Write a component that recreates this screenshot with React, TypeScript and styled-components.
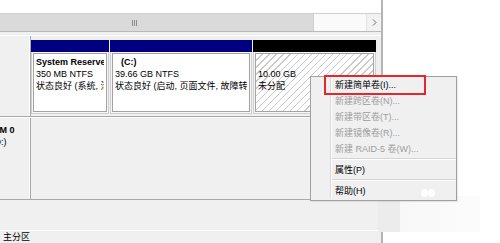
import styled, { createGlobalStyle } from 'styled-components';

const GlobalStyle = createGlobalStyle`
  html, body {
    margin: 0;
    padding: 0;
    background: #ffffff;
  }
  body {
    font-family: "Liberation Sans", "Noto Sans CJK SC", sans-serif;
    font-size: 9px;
    color: #000;
  }
`;

const Page = styled.div`
  position: relative;
  width: 500px;
  height: 243px;
  overflow: hidden;
  background: #ffffff;
`;

const Window = styled.div`
  width: 381px;
  height: 243px;
  display: flex;
  flex-direction: column;
  border-right: 2px solid #b4b4b4;
  background: #f0f0f0;
`;

const ListView = styled.div`
  height: 13px;
  background: #ffffff;
  border-bottom: 1px solid #cfcfcf;
`;

// horizontal scroll bar of the volume list
const HScroll = styled.div`
  height: 17px;
  display: flex;
  overflow: hidden;
  background: #f4f4f4;
  border-bottom: 1px solid #b9b9b9;
`;

const Thumb = styled.div`
  margin-left: -43px;
  width: 356px;
  flex: none;
  display: flex;
  align-items: center;
  justify-content: center;
  background: #dadada;
  border-right: 1px solid #cdcdcd;
`;

const Track = styled.div`
  flex: 1;
  background: #fafafa;
`;

const ArrowButton = styled.div`
  width: 14px;
  display: flex;
  align-items: center;
  justify-content: center;
  background: #f2f2f2;
  border-left: 1px solid #e2e2e2;
`;

const Pane = styled.div`
  flex: 1;
  display: flex;
  flex-direction: column;
  padding-top: 3px;
`;

const DiskRow = styled.div<{ $height: number }>`
  height: ${({ $height }) => $height}px;
  flex: none;
  display: flex;
  border-top: 1px solid #ffffff;
  border-bottom: 1px solid #a9a9a9;
`;

const DiskLabel = styled.div`
  width: 30px;
  flex: none;
  overflow: hidden;
  border-right: 1px solid #a9a9a9;
  box-shadow: inset -1px 0 0 #ffffff;
  white-space: nowrap;
  padding-top: 6px;
  line-height: 12px;
`;

const LabelText = styled.div`
  margin-left: -30px;
`;

const LabelTitle = styled.div`
  font-weight: bold;
`;

const Partitions = styled.div`
  display: flex;
  padding: 4px 0 2px 0;
`;

const Partition = styled.div<{ $width: number }>`
  width: ${({ $width }) => $width}px;
  flex: none;
  display: flex;
  flex-direction: column;
`;

const PartHeader = styled.div<{ $color: string }>`
  height: 12px;
  margin-right: 1px;
  background: ${({ $color }) => $color};
`;

const PartBody = styled.div`
  flex: 1;
  margin-right: 1px;
  padding: 1px;
  background: #f7f7f7;
  border: 1px solid #cfcfcf;
  border-top: none;
  display: flex;
  overflow: hidden;
`;

const PartInner = styled.div<{ $hatched?: boolean }>`
  flex: 1;
  min-width: 0;
  overflow: hidden;
  white-space: nowrap;
  border: 1px solid #a3a3a3;
  padding: 2px 2px 0 2px;
  line-height: 12px;
  background: ${({ $hatched }) =>
    $hatched
      ? 'repeating-linear-gradient(135deg, #ffffff 0px, #ffffff 4px, #c9c9c9 4px, #c9c9c9 5px)'
      : '#ffffff'};
`;

const PartName = styled.div<{ $indent?: number }>`
  font-weight: bold;
  height: 12px;
  overflow: hidden;
  padding-left: ${({ $indent }) => $indent ?? 0}px;
`;

const PartLine = styled.div`
  overflow: hidden;
`;

const Spacer = styled.div`
  flex: 1;
`;

const Legend = styled.div`
  height: 12px;
  flex: none;
  border-top: 1px solid #ffffff;
  padding-left: 3px;
  line-height: 12px;
`;

// context menu
const Menu = styled.div`
  position: absolute;
  left: 310px;
  top: 76px;
  width: 145px;
  padding-bottom: 1px;
  background: #f0f0f0;
  border: 1px solid #a0a0a0;
  box-shadow: 1px 1px 1px rgba(0, 0, 0, 0.08);
  display: flex;
  flex-direction: column;
`;

const MenuBody = styled.div`
  position: relative;
  display: flex;
  flex-direction: column;
  &::before {
    content: '';
    position: absolute;
    left: 19px;
    top: 0;
    bottom: 0;
    width: 1px;
    background: #d8d8d8;
    box-shadow: 1px 0 0 #ffffff;
  }
`;

const MenuItem = styled.div<{ $disabled?: boolean }>`
  height: 16px;
  line-height: 16px;
  padding-left: 24px;
  white-space: nowrap;
  color: ${({ $disabled }) => ($disabled ? '#9d9d9d' : '#000000')};
`;

const MenuSep = styled.div`
  height: 1px;
  margin: 1px 0 2px 21px;
  background: #d4d4d4;
  border-bottom: 1px solid #ffffff;
`;

// annotation laid over the screenshot
const Highlight = styled.div`
  position: absolute;
  left: 324px;
  top: 75px;
  width: 98px;
  height: 16px;
  border: 2px solid #e5262c;
`;

const Watermark = styled.div`
  position: absolute;
  left: 378px;
  top: 196px;
  width: 102px;
  height: 36px;
  background: linear-gradient(90deg, #ececec 0px, #ececec 22px, #f8f8f8 22px, #fbfbfb 100%);
`;

const Dot = styled.div<{ $left: number }>`
  position: absolute;
  left: ${({ $left }) => $left}px;
  top: 189px;
  width: 7px;
  height: 8px;
  border-radius: 50%;
  background: #ffffff;
  opacity: 0.9;
`;

const menuItems = [
  { text: '新建简单卷(I)...' },
  { text: '新建跨区卷(N)...', disabled: true },
  { text: '新建带区卷(T)...', disabled: true },
  { text: '新建镜像卷(R)...', disabled: true },
  { text: '新建 RAID-5 卷(W)...', disabled: true },
];

export default function App() {
  return (
    <Page>
      <GlobalStyle />
      <Window>
        <ListView />
        <HScroll>
          <Thumb>
            <svg width="6" height="6" viewBox="0 0 6 6">
              <path d="M0.5 0 V6 M2.5 0 V6 M4.5 0 V6" stroke="#8c8c8c" strokeWidth="1" />
            </svg>
          </Thumb>
          <Track />
          <ArrowButton>
            <svg width="5" height="7" viewBox="0 0 5 7">
              <path d="M1 0.5 L4 3.5 L1 6.5" fill="none" stroke="#6a6a6a" strokeWidth="1" />
            </svg>
          </ArrowButton>
        </HScroll>
        <Pane>
          <DiskRow $height={80}>
            <DiskLabel />
            <Partitions>
              <Partition $width={79}>
                <PartHeader $color="#000080" />
                <PartBody>
                  <PartInner>
                    <PartName>System Reserved</PartName>
                    <PartLine>350 MB NTFS</PartLine>
                    <PartLine>状态良好 (系统, 活动, 主分区)</PartLine>
                  </PartInner>
                </PartBody>
              </Partition>
              <Partition $width={143}>
                <PartHeader $color="#000080" />
                <PartBody>
                  <PartInner>
                    <PartName $indent={6}>(C:)</PartName>
                    <PartLine>39.66 GB NTFS</PartLine>
                    <PartLine>状态良好 (启动, 页面文件, 故障转储, 主分区)</PartLine>
                  </PartInner>
                </PartBody>
              </Partition>
              <Partition $width={124}>
                <PartHeader $color="#000000" />
                <PartBody>
                  <PartInner $hatched>
                    <PartName />
                    <PartLine>10.00 GB</PartLine>
                    <PartLine>未分配</PartLine>
                  </PartInner>
                </PartBody>
              </Partition>
            </Partitions>
          </DiskRow>
          <DiskRow $height={81}>
            <DiskLabel>
              <LabelText>
                <LabelTitle>CD-ROM 0</LabelTitle>
                <div>DVD (D:)</div>
              </LabelText>
            </DiskLabel>
          </DiskRow>
          <Spacer />
          <Legend>主分区</Legend>
        </Pane>
      </Window>
      <Watermark />
      <Menu>
        <MenuBody>
          {menuItems.map((item) => (
            <MenuItem key={item.text} $disabled={item.disabled}>
              {item.text}
            </MenuItem>
          ))}
          <MenuSep />
          <MenuItem>属性(P)</MenuItem>
          <MenuSep />
          <MenuItem>帮助(H)</MenuItem>
        </MenuBody>
      </Menu>
      <Dot $left={421} />
      <Dot $left={428} />
      <Highlight />
    </Page>
  );
}
